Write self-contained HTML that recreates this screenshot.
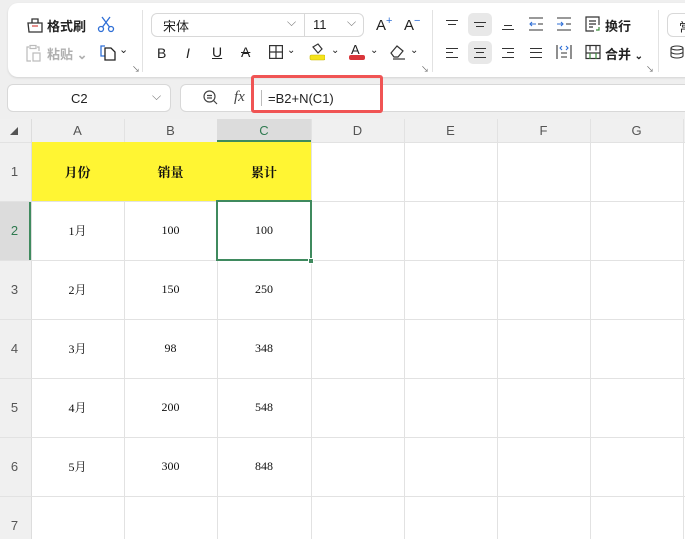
<!DOCTYPE html>
<html><head><meta charset="utf-8"><style>
*{margin:0;padding:0;box-sizing:border-box}
body{width:685px;height:539px;overflow:hidden;background:#efefef;font-family:"Liberation Sans","Noto Sans CJK SC",sans-serif;position:relative;color:#222}
.a{position:absolute}
.panel{left:8px;top:3px;width:700px;height:74px;background:#fff;border-radius:10px;box-shadow:0 1px 2px rgba(0,0,0,.12)}
.sep{width:1px;background:#e2e2e2;top:10px;height:62px}
.t{font-size:13px;color:#222;white-space:nowrap}
.g{color:#b0b0b0}
.box{background:#fff;border:1px solid #d8d8d8;border-radius:6px}
.hl{background:#e8e8e8;border-radius:5px}
.ln{height:1px;background:#333}
.cell{position:absolute;display:flex;align-items:center;justify-content:center;font-family:"Liberation Serif","Noto Serif CJK SC",serif;font-size:12px;color:#111}
.hd{position:absolute;display:flex;align-items:center;justify-content:center;font-size:13px;color:#555}
.vl{position:absolute;width:1px;background:#e2e2e2}
.hz{position:absolute;height:1px;background:#e2e2e2}
.bh{font-family:"Noto Serif CJK SC",serif;font-weight:bold;font-size:13px}
</style></head><body>
<div class="a panel"></div>
<svg class="a" style="left:26px;top:16px" width="18" height="18" viewBox="0 0 18 18" fill="none" stroke="#333" stroke-width="1.3"><path d="M2 7h14v9H3z"/><path d="M6 7V3h6v4"/><path d="M6 10h6" stroke="#d9534f"/></svg>
<div class="a t" style="left:47px;top:16px;font-weight:bold">格式刷</div>
<svg class="a" style="left:97px;top:15px" width="18" height="18" viewBox="0 0 18 18" fill="none" stroke="#2f6fd6" stroke-width="1.3"><circle cx="4" cy="14" r="2.5"/><circle cx="14" cy="14" r="2.5"/><path d="M5.5 12L13 2M12.5 12L5 2"/></svg>
<svg class="a" style="left:26px;top:44px" width="16" height="18" viewBox="0 0 16 18" fill="none" stroke="#bbb" stroke-width="1.2"><path d="M3 3H1v14h4M11 3h2v4"/><rect x="4" y="1.5" width="6" height="3"/><rect x="7" y="9" width="7" height="8"/></svg>
<div class="a t g" style="left:47px;top:44px;font-weight:bold">粘贴 ⌄</div>
<svg class="a" style="left:99px;top:43px" width="18" height="18" viewBox="0 0 18 18" fill="none" stroke-width="1.3"><path d="M6 3H2v10h4" stroke="#2f6fd6"/><path d="M6 5h6l4 4v8H6z" stroke="#222"/></svg>
<div class="a t" style="left:119px;top:43px;font-size:11px">⌄</div>
<div class="a t" style="left:132px;top:64px;font-size:8px;color:#666">↘</div>
<div class="a sep" style="left:142px"></div>
<div class="a box" style="left:151px;top:13px;width:213px;height:24px"></div>
<div class="a" style="left:304px;top:14px;width:1px;height:22px;background:#d8d8d8"></div>
<div class="a t" style="left:163px;top:16px">宋体</div>
<div class="a t" style="left:287px;top:15px;color:#777;font-size:12px">⌵</div>
<div class="a t" style="left:313px;top:17px">11</div>
<div class="a t" style="left:347px;top:15px;color:#777;font-size:12px">⌵</div>
<div class="a t" style="left:376px;top:15px;font-size:15px">A<sup style="color:#2f6fd6;font-size:11px">+</sup></div>
<div class="a t" style="left:404px;top:15px;font-size:15px">A<sup style="color:#2f6fd6;font-size:11px">−</sup></div>
<div class="a t" style="left:157px;top:45px;font-size:14px">B</div>
<div class="a t" style="left:186px;top:45px;font-size:14px;font-style:italic">I</div>
<div class="a t" style="left:212px;top:44px;font-size:14px;text-decoration:underline">U</div>
<div class="a t" style="left:241px;top:44px;font-size:14px;text-decoration:line-through">A</div>
<svg class="a" style="left:269px;top:45px" width="14" height="14" fill="none" stroke="#333" stroke-width="1.2"><rect x=".6" y=".6" width="12.8" height="12.8"/><path d="M7 0v14M0 7h14"/></svg>
<div class="a t" style="left:287px;top:45px;font-size:10px">⌄</div>
<svg class="a" style="left:309px;top:43px" width="16" height="18"><path d="M4 4l5-3 4 5-4 4z" fill="none" stroke="#333" stroke-width="1.2"/><rect x="1" y="12" width="15" height="5" rx="1.5" fill="#f5e31a" stroke="#c9b800" stroke-width=".6"/></svg>
<div class="a t" style="left:331px;top:45px;font-size:10px">⌄</div>
<div class="a t" style="left:351px;top:42px;font-size:13px">A</div>
<div class="a" style="left:349px;top:55px;width:16px;height:5px;background:#d9363a;border-radius:2px"></div>
<div class="a t" style="left:370px;top:45px;font-size:10px">⌄</div>
<svg class="a" style="left:389px;top:44px" width="18" height="16" fill="none" stroke="#333" stroke-width="1.2"><path d="M2 9l6-7 6 5-5 6H5z"/><path d="M4 15h12"/></svg>
<div class="a t" style="left:410px;top:45px;font-size:10px">⌄</div>
<div class="a t" style="left:421px;top:64px;font-size:8px;color:#666">↘</div>
<div class="a sep" style="left:432px"></div>
<div class="a hl" style="left:468px;top:13px;width:24px;height:23px"></div>
<div class="a hl" style="left:468px;top:41px;width:24px;height:23px"></div>
<div class="a ln" style="left:446px;top:20px;width:12px"></div><div class="a ln" style="left:448px;top:24px;width:8px"></div>
<div class="a ln" style="left:474px;top:22px;width:12px"></div><div class="a ln" style="left:476px;top:26px;width:8px"></div>
<div class="a ln" style="left:502px;top:29px;width:12px"></div><div class="a ln" style="left:504px;top:25px;width:8px"></div>
<svg class="a" style="left:529px;top:17px" width="14" height="14" fill="none" stroke-width="1.1"><path d="M0 1h14M0 13h14M9 7h5" stroke="#333"/><path d="M7 7H1m2-2L1 7l2 2" stroke="#2f6fd6"/></svg>
<svg class="a" style="left:557px;top:17px" width="14" height="14" fill="none" stroke-width="1.1"><path d="M0 1h14M0 13h14M9 7h5" stroke="#333"/><path d="M0 7h6m-2-2l2 2-2 2" stroke="#2f6fd6"/></svg>
<svg class="a" style="left:585px;top:16px" width="16" height="16" fill="none" stroke="#333" stroke-width="1.2"><path d="M14 9V1H1v14h8"/><path d="M4 5h7M4 8h7M4 11h4"/><path d="M14 11v3h-3" stroke="#3a8a3a"/></svg>
<div class="a t" style="left:605px;top:16px;font-weight:bold">换行</div>
<div class="a ln" style="left:446px;top:48px;width:12px"></div><div class="a ln" style="left:446px;top:52px;width:7px"></div><div class="a ln" style="left:446px;top:57px;width:12px"></div>
<div class="a ln" style="left:474px;top:48px;width:12px"></div><div class="a ln" style="left:476px;top:52px;width:8px"></div><div class="a ln" style="left:474px;top:57px;width:12px"></div>
<div class="a ln" style="left:502px;top:48px;width:12px"></div><div class="a ln" style="left:507px;top:52px;width:7px"></div><div class="a ln" style="left:502px;top:57px;width:12px"></div>
<div class="a ln" style="left:530px;top:48px;width:12px"></div><div class="a ln" style="left:530px;top:52px;width:12px"></div><div class="a ln" style="left:530px;top:57px;width:12px"></div>
<svg class="a" style="left:556px;top:44px" width="16" height="16" fill="none" stroke-width="1.1"><path d="M1 1v14M15 1v14M5 9h6M5 13h6" stroke="#333"/><path d="M6 2L4 4l2 2M10 2l2 2-2 2" stroke="#2f6fd6"/></svg>
<svg class="a" style="left:585px;top:44px" width="16" height="16" fill="none" stroke="#333" stroke-width="1.2"><rect x="1" y="1.5" width="14" height="13"/><path d="M1 9h14M5 1.5v5M11 1.5v5"/><path d="M5 9v6M11 9v6" stroke="#3a8a3a"/></svg>
<div class="a t" style="left:605px;top:44px;font-weight:bold">合并 <span style="font-size:10px">⌄</span></div>
<div class="a t" style="left:646px;top:64px;font-size:8px;color:#666">↘</div>
<div class="a sep" style="left:658px"></div>
<div class="a box" style="left:667px;top:13px;width:30px;height:24px"></div>
<div class="a t" style="left:679px;top:17px">常</div>
<svg class="a" style="left:670px;top:45px" width="14" height="14" fill="none" stroke="#333" stroke-width="1.1"><ellipse cx="7" cy="3" rx="6" ry="2"/><path d="M1 3v8c0 1 3 2 6 2s6-1 6-2V3M1 7c0 1 3 2 6 2s6-1 6-2"/></svg>
<div class="a box" style="left:7px;top:84px;width:164px;height:28px"></div>
<div class="a t" style="left:71px;top:91px">C2</div>
<div class="a t" style="left:152px;top:89px;color:#777;font-size:12px">⌵</div>
<div class="a box" style="left:180px;top:84px;width:520px;height:28px"></div>
<svg class="a" style="left:203px;top:90px" width="15" height="15" fill="none" stroke="#444" stroke-width="1.2"><circle cx="6.5" cy="6.5" r="5.5"/><path d="M4 5.5h5M4 8h5M10.5 10.5l3.5 3.5"/></svg>
<div class="a t" style="left:234px;top:89px;font-family:'Liberation Serif',serif;font-style:italic;font-size:15px;color:#444">fx</div>
<div class="a" style="left:261px;top:90px;width:1px;height:16px;background:#bbb"></div>
<div class="a t" style="left:268px;top:91px">=B2+N(C1)</div>
<div class="a" style="left:251px;top:75px;width:132px;height:38px;border:3px solid #f05454;border-radius:3px"></div>
<div class="a" style="left:0;top:119px;width:685px;height:420px;background:#fff"></div>
<div class="a" style="left:0;top:119px;width:685px;height:23px;background:#f0f0f0"></div>
<div class="a" style="left:0;top:119px;width:31px;height:420px;background:#f0f0f0"></div>
<div class="a" style="left:217px;top:119px;width:94px;height:23px;background:#dcdcdc"></div>
<div class="a" style="left:217px;top:140px;width:94px;height:2px;background:#3f8a5e"></div>
<div class="a" style="left:0;top:201px;width:31px;height:59px;background:#dcdcdc"></div>
<div class="a" style="left:29px;top:201px;width:2px;height:59px;background:#3f8a5e"></div>
<div class="a" style="left:31px;top:142px;width:280px;height:59px;background:#fff533"></div>
<div class="vl" style="left:124px;top:119px;height:23px"></div>
<div class="vl" style="left:311px;top:119px;height:420px"></div>
<div class="vl" style="left:404px;top:119px;height:420px"></div>
<div class="vl" style="left:497px;top:119px;height:420px"></div>
<div class="vl" style="left:590px;top:119px;height:420px"></div>
<div class="vl" style="left:683px;top:119px;height:420px"></div>
<div class="vl" style="left:124px;top:201px;height:338px"></div>
<div class="vl" style="left:217px;top:201px;height:338px"></div>
<div class="vl" style="left:31px;top:119px;height:420px;background:#ddd"></div>
<div class="hz" style="left:0;top:142px;width:31px"></div>
<div class="hz" style="left:311px;top:142px;width:374px"></div>
<div class="hz" style="left:0;top:201px;width:685px"></div>
<div class="hz" style="left:0;top:260px;width:685px"></div>
<div class="hz" style="left:0;top:319px;width:685px"></div>
<div class="hz" style="left:0;top:378px;width:685px"></div>
<div class="hz" style="left:0;top:437px;width:685px"></div>
<div class="hz" style="left:0;top:496px;width:685px"></div>
<svg class="a" style="left:10px;top:127px" width="8" height="8"><path d="M8 0V8H0z" fill="#555"/></svg>
<div class="hd" style="left:31px;top:119px;width:93px;height:23px">A</div>
<div class="hd" style="left:124px;top:119px;width:93px;height:23px">B</div>
<div class="hd" style="left:217px;top:119px;width:94px;height:23px;color:#2f7a50">C</div>
<div class="hd" style="left:311px;top:119px;width:93px;height:23px">D</div>
<div class="hd" style="left:404px;top:119px;width:93px;height:23px">E</div>
<div class="hd" style="left:497px;top:119px;width:93px;height:23px">F</div>
<div class="hd" style="left:590px;top:119px;width:93px;height:23px">G</div>
<div class="hd" style="left:0;top:142px;width:29px;height:59px">1</div>
<div class="hd" style="left:0;top:201px;width:29px;height:59px;color:#2f7a50">2</div>
<div class="hd" style="left:0;top:260px;width:29px;height:59px">3</div>
<div class="hd" style="left:0;top:319px;width:29px;height:59px">4</div>
<div class="hd" style="left:0;top:378px;width:29px;height:59px">5</div>
<div class="hd" style="left:0;top:437px;width:29px;height:59px">6</div>
<div class="hd" style="left:0;top:515px;width:29px;height:20px">7</div>
<div class="cell bh" style="left:31px;top:142px;width:93px;height:59px">月份</div>
<div class="cell bh" style="left:124px;top:142px;width:93px;height:59px">销量</div>
<div class="cell bh" style="left:217px;top:142px;width:94px;height:59px">累计</div>
<div class="cell" style="left:31px;top:201px;width:93px;height:59px">1月</div><div class="cell" style="left:124px;top:201px;width:93px;height:59px">100</div><div class="cell" style="left:217px;top:201px;width:94px;height:59px">100</div>
<div class="cell" style="left:31px;top:260px;width:93px;height:59px">2月</div><div class="cell" style="left:124px;top:260px;width:93px;height:59px">150</div><div class="cell" style="left:217px;top:260px;width:94px;height:59px">250</div>
<div class="cell" style="left:31px;top:319px;width:93px;height:59px">3月</div><div class="cell" style="left:124px;top:319px;width:93px;height:59px">98</div><div class="cell" style="left:217px;top:319px;width:94px;height:59px">348</div>
<div class="cell" style="left:31px;top:378px;width:93px;height:59px">4月</div><div class="cell" style="left:124px;top:378px;width:93px;height:59px">200</div><div class="cell" style="left:217px;top:378px;width:94px;height:59px">548</div>
<div class="cell" style="left:31px;top:437px;width:93px;height:59px">5月</div><div class="cell" style="left:124px;top:437px;width:93px;height:59px">300</div><div class="cell" style="left:217px;top:437px;width:94px;height:59px">848</div>
<div class="a" style="left:216px;top:200px;width:96px;height:61px;border:2px solid #3f8a5e"></div>
<div class="a" style="left:308px;top:258px;width:6px;height:6px;background:#3f8a5e;border:1px solid #fff"></div>
</body></html>
